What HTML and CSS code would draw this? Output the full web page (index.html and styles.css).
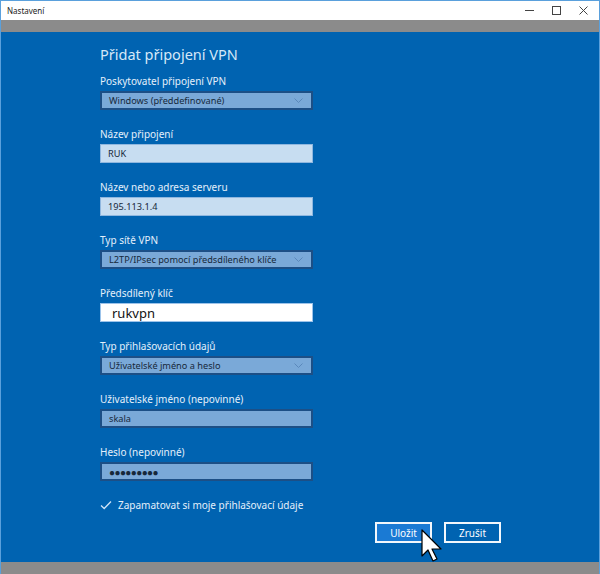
FILE: index.html
```html
<!DOCTYPE html>
<html lang="cs">
<head>
    <meta charset="UTF-8">
    <meta name="viewport" content="width=device-width, initial-scale=1.0">
    <title>Nastavení</title>
    <link rel="stylesheet" href="styles.css">
</head>
<body>
    <div class="window">
        <header class="titlebar">
            <span class="titlebar-name">Nastavení</span>
            <div class="titlebar-controls">
                <span class="ctrl">
                    <svg width="9" height="9" viewBox="0 0 9 9"><path d="M0 4.5h9" stroke="#444" stroke-width="1"/></svg>
                </span>
                <span class="ctrl">
                    <svg width="9" height="9" viewBox="0 0 9 9"><rect x="0.5" y="0.5" width="8" height="8" fill="none" stroke="#444" stroke-width="1"/></svg>
                </span>
                <span class="ctrl">
                    <svg width="9" height="9" viewBox="0 0 9 9"><path d="M0.5 0.5l8 8M8.5 0.5l-8 8" stroke="#444" stroke-width="1"/></svg>
                </span>
            </div>
        </header>

        <div class="band"></div>

        <main class="content">
            <h1 class="page-title">Přidat připojení VPN</h1>

            <div class="field">
                <label class="field-label">Poskytovatel připojení VPN</label>
                <div class="select">
                    <span>Windows (předdefinované)</span>
                    <svg class="chevron" width="9" height="5" viewBox="0 0 9 5"><path d="M0.5 0.5l4 4 4-4" fill="none" stroke="#5a88bb" stroke-width="1"/></svg>
                </div>
            </div>

            <div class="field">
                <label class="field-label">Název připojení</label>
                <div class="input">RUK</div>
            </div>

            <div class="field">
                <label class="field-label">Název nebo adresa serveru</label>
                <div class="input">195.113.1.4</div>
            </div>

            <div class="field">
                <label class="field-label">Typ sítě VPN</label>
                <div class="select">
                    <span>L2TP/IPsec pomocí předsdíleného klíče</span>
                    <svg class="chevron" width="9" height="5" viewBox="0 0 9 5"><path d="M0.5 0.5l4 4 4-4" fill="none" stroke="#5a88bb" stroke-width="1"/></svg>
                </div>
            </div>

            <div class="field">
                <label class="field-label">Předsdílený klíč</label>
                <div class="input input-focus">rukvpn</div>
            </div>

            <div class="field">
                <label class="field-label">Typ přihlašovacích údajů</label>
                <div class="select">
                    <span>Uživatelské jméno a heslo</span>
                    <svg class="chevron" width="9" height="5" viewBox="0 0 9 5"><path d="M0.5 0.5l4 4 4-4" fill="none" stroke="#5a88bb" stroke-width="1"/></svg>
                </div>
            </div>

            <div class="field">
                <label class="field-label">Uživatelské jméno (nepovinné)</label>
                <div class="input input-dark">skala</div>
            </div>

            <div class="field">
                <label class="field-label">Heslo (nepovinné)</label>
                <div class="input input-dark input-pass">●●●●●●●●●</div>
            </div>

            <div class="check-row">
                <svg width="12" height="10" viewBox="0 0 12 10"><path d="M1 5.5l3.2 3L11 1.5" fill="none" stroke="#cfe3f7" stroke-width="1.3"/></svg>
                <span>Zapamatovat si moje přihlašovací údaje</span>
            </div>

            <div class="actions">
                <button class="btn btn-primary">Uložit</button>
                <button class="btn">Zrušit</button>
                <svg class="cursor" width="22" height="36" viewBox="0 0 22 36">
                    <path d="M1 1v26l6-6 5 11 4-2-5-10h9z" fill="#fff" stroke="#000" stroke-width="1.2" stroke-linejoin="round"/>
                </svg>
            </div>
        </main>

        <div class="band"></div>
    </div>
</body>
</html>
```

FILE: styles.css
```css
* {
    margin: 0;
    padding: 0;
    box-sizing: border-box;
}

body {
    width: 600px;
    height: 574px;
    overflow: hidden;
    font-family: "Noto Sans", "Open Sans", sans-serif;
}

.window {
    height: 574px;
    display: flex;
    flex-direction: column;
    border: 1px solid #5aa0dc;
    border-bottom: none;
}

.titlebar {
    height: 19px;
    background-color: #fff;
    display: flex;
    align-items: center;
    justify-content: space-between;
    padding-left: 6px;
    padding-right: 2px;
}

.titlebar-name {
    font-size: 8px;
    color: #222;
}

.titlebar-controls {
    display: flex;
    height: 100%;
}

.ctrl {
    width: 27px;
    display: flex;
    align-items: center;
    justify-content: center;
}

.band {
    height: 12px;
    background-color: #8b8b8b;
}

.content {
    flex: 1;
    background-color: #0063b1;
    padding: 12px 0 0 99px;
    position: relative;
}

.page-title {
    font-size: 14.5px;
    font-weight: 400;
    color: #d6e8f8;
    margin-bottom: 10px;
    line-height: 20px;
}

.field {
    margin-bottom: 17px;
}

.field-label {
    display: block;
    font-size: 10px;
    color: #e4f0fb;
    margin-bottom: 3px;
    line-height: 14px;
}

.select,
.input {
    width: 213px;
    height: 19px;
    display: flex;
    align-items: center;
    justify-content: space-between;
    padding: 0 8px 0 7px;
    font-size: 9.2px;
    color: #16283a;
}

.select {
    background-color: #7aa9d8;
    border: 2px solid #1c4f86;
}

.input {
    background-color: #c7ddf1;
    border: 1px solid #8fb7df;
}

.input-dark {
    background-color: #7aa9d8;
    border: 2px solid #1c4f86;
}

.input-focus {
    background-color: #fff;
    border: 1px solid #9cc3ea;
    font-size: 13px;
    color: #111;
    padding-left: 11px;
}

.input-pass {
    font-size: 10px;
    letter-spacing: -0.6px;
    justify-content: flex-start;
}

.check-row {
    display: flex;
    align-items: center;
    gap: 6px;
    margin-top: 15px;
    font-size: 10px;
    color: #e4f0fb;
}

.actions {
    display: flex;
    gap: 12px;
    margin: 10px 0 0 275px;
    position: relative;
}

.btn {
    width: 57px;
    height: 21px;
    font-family: "Noto Sans", "Open Sans", sans-serif;
    font-size: 10px;
    color: #fff;
    background-color: transparent;
    border: 2px solid #f2f7fc;
}

.btn-primary {
    background-color: #1a7ad4;
}

.cursor {
    position: absolute;
    left: 46px;
    top: 7px;
}
```
